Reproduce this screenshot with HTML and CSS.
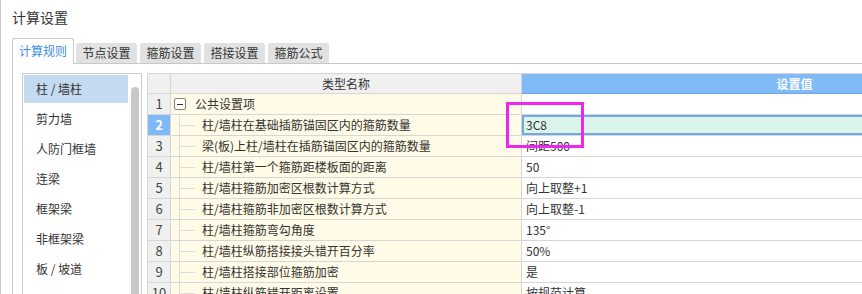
FILE: index.html
```html
<!DOCTYPE html>
<html lang="zh-CN">
<head>
    <meta charset="UTF-8">
    <title>计算设置</title>
    <link rel="stylesheet" href="styles.css">
</head>
<body>
    <div class="dialog">
        <div class="title">计算设置</div>

        <div class="tabs">
            <div class="tab active">计算规则</div>
            <div class="tab">节点设置</div>
            <div class="tab">箍筋设置</div>
            <div class="tab">搭接设置</div>
            <div class="tab">箍筋公式</div>
        </div>

        <div class="panel">
            <div class="category-box">
                <ul class="category-list">
                    <li class="selected">柱 / 墙柱</li>
                    <li>剪力墙</li>
                    <li>人防门框墙</li>
                    <li>连梁</li>
                    <li>框架梁</li>
                    <li>非框架梁</li>
                    <li>板 / 坡道</li>
                </ul>
                <div class="scrollbar"><div class="thumb"></div></div>
            </div>

            <table class="grid">
                <colgroup>
                    <col class="col-num">
                    <col class="col-name">
                    <col class="col-value">
                </colgroup>
                <thead>
                    <tr>
                        <th></th>
                        <th>类型名称</th>
                        <th class="value-head">设置值</th>
                    </tr>
                </thead>
                <tbody>
                    <tr>
                        <td class="num">1</td>
                        <td class="name"><div class="cell"><span class="toggle"></span>公共设置项</div></td>
                        <td class="value"></td>
                    </tr>
                    <tr>
                        <td class="num current">2</td>
                        <td class="name"><div class="cell child"><span class="branch"></span>柱/墙柱在基础插筋锚固区内的箍筋数量</div></td>
                        <td class="value editing">3C8</td>
                    </tr>
                    <tr>
                        <td class="num">3</td>
                        <td class="name"><div class="cell child"><span class="branch"></span>梁(板)上柱/墙柱在插筋锚固区内的箍筋数量</div></td>
                        <td class="value">间距500</td>
                    </tr>
                    <tr>
                        <td class="num">4</td>
                        <td class="name"><div class="cell child"><span class="branch"></span>柱/墙柱第一个箍筋距楼板面的距离</div></td>
                        <td class="value">50</td>
                    </tr>
                    <tr>
                        <td class="num">5</td>
                        <td class="name"><div class="cell child"><span class="branch"></span>柱/墙柱箍筋加密区根数计算方式</div></td>
                        <td class="value">向上取整+1</td>
                    </tr>
                    <tr>
                        <td class="num">6</td>
                        <td class="name"><div class="cell child"><span class="branch"></span>柱/墙柱箍筋非加密区根数计算方式</div></td>
                        <td class="value">向上取整-1</td>
                    </tr>
                    <tr>
                        <td class="num">7</td>
                        <td class="name"><div class="cell child"><span class="branch"></span>柱/墙柱箍筋弯勾角度</div></td>
                        <td class="value">135°</td>
                    </tr>
                    <tr>
                        <td class="num">8</td>
                        <td class="name"><div class="cell child"><span class="branch"></span>柱/墙柱纵筋搭接接头错开百分率</div></td>
                        <td class="value">50%</td>
                    </tr>
                    <tr>
                        <td class="num">9</td>
                        <td class="name"><div class="cell child"><span class="branch"></span>柱/墙柱搭接部位箍筋加密</div></td>
                        <td class="value">是</td>
                    </tr>
                    <tr>
                        <td class="num">10</td>
                        <td class="name"><div class="cell child"><span class="branch"></span>柱/墙柱纵筋错开距离设置</div></td>
                        <td class="value">按规范计算</td>
                    </tr>
                </tbody>
            </table>
        </div>

        <!-- annotation frame drawn over the grid -->
        <div class="marker"></div>
    </div>
</body>
</html>
```

FILE: styles.css
```css
html, body {
    margin: 0;
    padding: 0;
    background-color: white;
}
body {
    font-family: "Noto Sans CJK SC", "Microsoft YaHei", sans-serif;
    font-size: 12px;
    color: #333;
}
.dialog {
    position: relative;
    width: 862px;
    height: 294px;
    overflow: hidden;
    border-left: 1px solid #c8c8c8;
    box-sizing: border-box;
}
.title {
    height: 38px;
    padding-left: 11px;
    font-size: 14px;
    line-height: 34px;
    color: #333;
}

/* tabs */
.tabs {
    display: flex;
    align-items: flex-end;
    margin-left: 11px;
    height: 25px;
    border-bottom: 1px solid #c8c8c8;
}
.tab {
    width: 61px;
    height: 20px;
    margin-right: 3px;
    background-color: #e1e1e1;
    border-radius: 3px 3px 0 0;
    text-align: center;
    line-height: 20px;
    color: #333;
}
.tab.active {
    width: 62px;
    height: 26px;
    margin-right: 2px;
    margin-bottom: -1px;
    box-sizing: border-box;
    background-color: white;
    border: 1px solid #c8c8c8;
    border-bottom: none;
    line-height: 23px;
    color: #3a8ee6;
}

/* panel */
.panel {
    display: flex;
    align-items: flex-start;
    margin-left: 11px;
    padding: 9px 0 0 9px;
    height: 240px;
    border-left: 1px solid #c8c8c8;
}
.category-box {
    display: flex;
    flex: 0 0 auto;
    width: 120px;
    height: 260px;
    box-sizing: border-box;
    border: 1px solid #cccccc;
    margin-right: 5px;
}
.category-list {
    list-style: none;
    margin: 1px;
    padding: 0;
    width: 104px;
}
.category-list li {
    height: 28px;
    margin-bottom: 2px;
    padding-left: 12px;
    line-height: 28px;
    white-space: nowrap;
}
.category-list li.selected {
    background-color: #c3daf1;
}
.scrollbar {
    flex: 1;
    padding: 13px 0 0 2px;
}
.thumb {
    width: 8px;
    height: 240px;
    background-color: #c8c8c8;
    border-radius: 4px 4px 0 0;
}

/* grid */
.grid {
    flex: 0 0 auto;
    border-collapse: collapse;
    table-layout: fixed;
    width: 920px;
    border-top: 1px solid #c4c4c4;
    border-left: 1px solid #d0d0d0;
}
.col-num { width: 23px; }
.col-name { width: 351px; }
.col-value { width: 546px; }
.grid th, .grid td {
    padding: 0;
    border: 1px solid #d6d6d6;
    white-space: nowrap;
    overflow: hidden;
}
.grid th {
    height: 19px;
    line-height: 19px;
    font-weight: normal;
    background-color: #f0f0f0;
}
.grid th.value-head {
    background-color: #80bbf7;
    color: white;
    font-weight: bold;
    border-bottom-color: #6ea6e0;
}
.grid td {
    height: 20px;
    line-height: 20px;
}
.grid td.num {
    background-color: #f0f0f0;
    text-align: center;
    color: #444;
    font-size: 13px;
}
.grid td.num.current {
    background-color: #80b9f5;
    color: white;
    font-weight: bold;
}
.grid td.name {
    background-color: #fffbe6;
}
.grid td.value {
    padding-left: 4px;
}
.grid td.value.editing {
    background-color: #dcf5ea;
    box-shadow: inset 0 0 0 2px #6fa8e3;
}
.cell {
    display: flex;
    align-items: center;
    height: 20px;
}
.toggle {
    position: relative;
    width: 10px;
    height: 10px;
    margin: 0 9px 0 3px;
    border: 1px solid #808080;
    border-radius: 2px;
    background-color: white;
}
.toggle::after {
    content: "";
    position: absolute;
    left: 2px;
    top: 5px;
    width: 6px;
    height: 1px;
    background-color: #333;
}
.branch {
    width: 16px;
    height: 20px;
    margin: 0 7px 0 8px;
    background:
        linear-gradient(#dcdcdc, #dcdcdc) left top / 1px 100% no-repeat,
        linear-gradient(#dcdcdc, #dcdcdc) left center / 100% 1px no-repeat;
}

.marker {
    position: absolute;
    left: 505px;
    top: 102px;
    width: 78px;
    height: 46px;
    box-sizing: border-box;
    border: 3px solid #f026f0;
}
```
